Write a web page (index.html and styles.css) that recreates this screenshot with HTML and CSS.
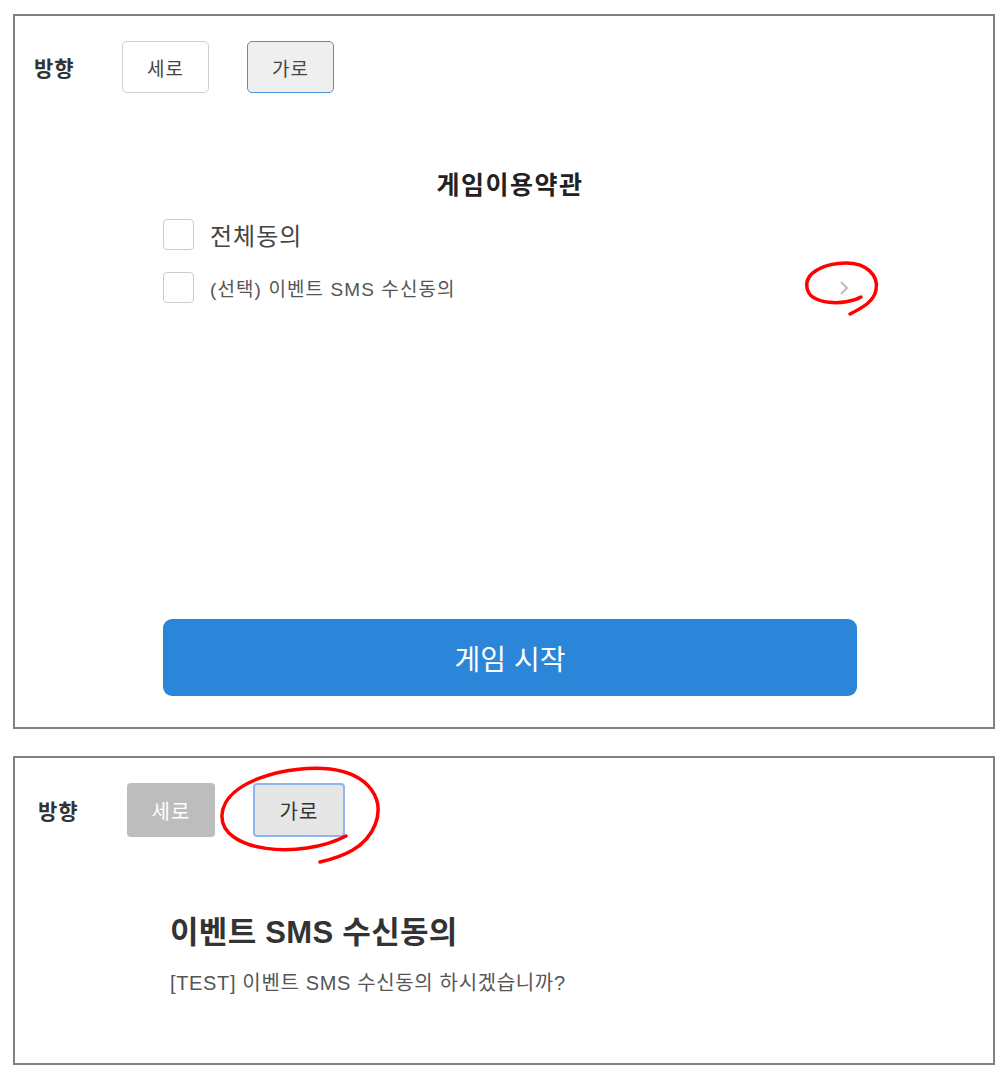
FILE: index.html
```html
<!DOCTYPE html>
<html lang="ko">
<head>
<meta charset="utf-8">
<title>게임이용약관</title>
<link rel="stylesheet" href="styles.css">
</head>
<body>
<div class="page">
  <section class="panel panel-main">
    <div class="dir-row">
      <span class="dir-label">방향</span>
      <button class="dir-btn">세로</button>
      <button class="dir-btn dir-btn-active">가로</button>
    </div>
    <div class="terms">
      <h2 class="terms-title">게임이용약관</h2>
      <label class="check-row check-row-all">
        <span class="check-box"></span>
        <span class="check-text-all">전체동의</span>
      </label>
      <div class="check-row check-row-item">
        <span class="check-box"></span>
        <span class="check-text">(선택) 이벤트 SMS 수신동의</span>
        <svg class="chevron" width="10" height="16" viewBox="0 0 10 16"><polyline points="2,2 8,8 2,14" fill="none" stroke="#bdbdbd" stroke-width="2"/></svg>
      </div>
      <button class="start-btn">게임 시작</button>
    </div>
  </section>

  <section class="panel panel-detail">
    <div class="dir-row dir-row-2">
      <span class="dir-label">방향</span>
      <button class="dir-btn2 dir-btn2-disabled">세로</button>
      <button class="dir-btn2 dir-btn2-focus">가로</button>
    </div>
    <div class="detail">
      <h2 class="detail-title">이벤트 SMS 수신동의</h2>
      <p class="detail-text">[TEST] 이벤트 SMS 수신동의 하시겠습니까?</p>
    </div>
  </section>
</div>

<svg class="annotations" width="1008" height="1079" viewBox="0 0 1008 1079">
  <path d="M861 297 C845 306 810 305 807 288 C804 272 826 263 846 263 C866 263 879 275 876 290 C874 301 864 307 850 314" fill="none" stroke="#ff0000" stroke-width="3.5" stroke-linecap="round"/>
  <path d="M346 836 C300 860 220 852 222 815 C224 780 290 765 330 769 C370 774 385 800 375 825 C366 848 342 857 320 862" fill="none" stroke="#ff0000" stroke-width="3.5" stroke-linecap="round"/>
</svg>
</body>
</html>
```

FILE: styles.css
```css
* { box-sizing: border-box; }

body {
  margin: 0;
  background: #ffffff;
  font-family: "Liberation Sans", "Noto Sans CJK KR", sans-serif;
  color: #333;
}

.page {
  padding: 14px 0 0 13px;
  display: flex;
  flex-direction: column;
  gap: 27px;
}

.panel {
  width: 982px;
  border: 2px solid #808080;
  background: #fff;
}

.panel-main {
  height: 715px;
  padding: 25px 0 0 19px;
}

.panel-detail {
  height: 309px;
  padding: 25px 0 0 23px;
}

.dir-row {
  display: flex;
  align-items: center;
}

.dir-label {
  width: 88px;
  font-size: 21px;
  letter-spacing: 1px;
  font-weight: bold;
  color: #333;
}

.dir-btn {
  width: 87px;
  height: 52px;
  margin-right: 38px;
  border: 1.5px solid #cfcfcf;
  border-radius: 5px;
  background: #fff;
  font-family: inherit;
  font-size: 19px;
  letter-spacing: 1px;
  color: #444;
  padding: 0;
}

.dir-btn-active {
  background: #efefef;
  border-color: #4a90d9;
}

.terms {
  width: 694px;
  margin-left: 129px;
  display: flex;
  flex-direction: column;
}

.terms-title {
  margin: 77px 0 0;
  font-size: 25px;
  letter-spacing: 1.5px;
  line-height: 30px;
  font-weight: bold;
  text-align: center;
  color: #222;
}

.check-row {
  display: flex;
  align-items: center;
  height: 31px;
}

.check-row-all { margin-top: 19px; }
.check-row-item { margin-top: 22px; }

.check-box {
  width: 31px;
  height: 31px;
  border: 1.5px solid #cccccc;
  border-radius: 4px;
  background: #fff;
  flex: none;
}

.check-text-all {
  margin-left: 16px;
  font-size: 24px;
  letter-spacing: 1px;
  color: #444;
}

.check-text {
  margin-left: 16px;
  font-size: 19px;
  letter-spacing: 1.1px;
  color: #555;
}

.chevron {
  margin-left: auto;
  margin-right: 8px;
}

.start-btn {
  margin-top: 316px;
  height: 77px;
  border: none;
  border-radius: 9px;
  background: #2b86d9;
  color: #fff;
  font-family: inherit;
  font-size: 28px;
  padding: 0;
}

.dir-row-2 .dir-label { width: 89px; }

.dir-btn2 {
  height: 54px;
  margin-right: 38px;
  border-radius: 4px;
  font-family: inherit;
  font-size: 20px;
  letter-spacing: 1px;
  padding: 0;
}

.dir-btn2-disabled {
  width: 88px;
  border: none;
  background: #bdbdbd;
  color: #fff;
}

.dir-btn2-focus {
  width: 92px;
  border: 2px solid #8db6f2;
  background: #e6e6e6;
  color: #333;
}

.detail {
  margin-left: 132px;
}

.detail-title {
  margin: 76px 0 0;
  font-size: 31px;
  letter-spacing: 0.3px;
  line-height: 40px;
  font-weight: bold;
  color: #333;
}

.detail-text {
  margin: 17px 0 0;
  font-size: 20px;
  letter-spacing: 0.65px;
  line-height: 26px;
  color: #555;
}

.annotations {
  position: absolute;
  left: 0;
  top: 0;
  pointer-events: none;
}
```
